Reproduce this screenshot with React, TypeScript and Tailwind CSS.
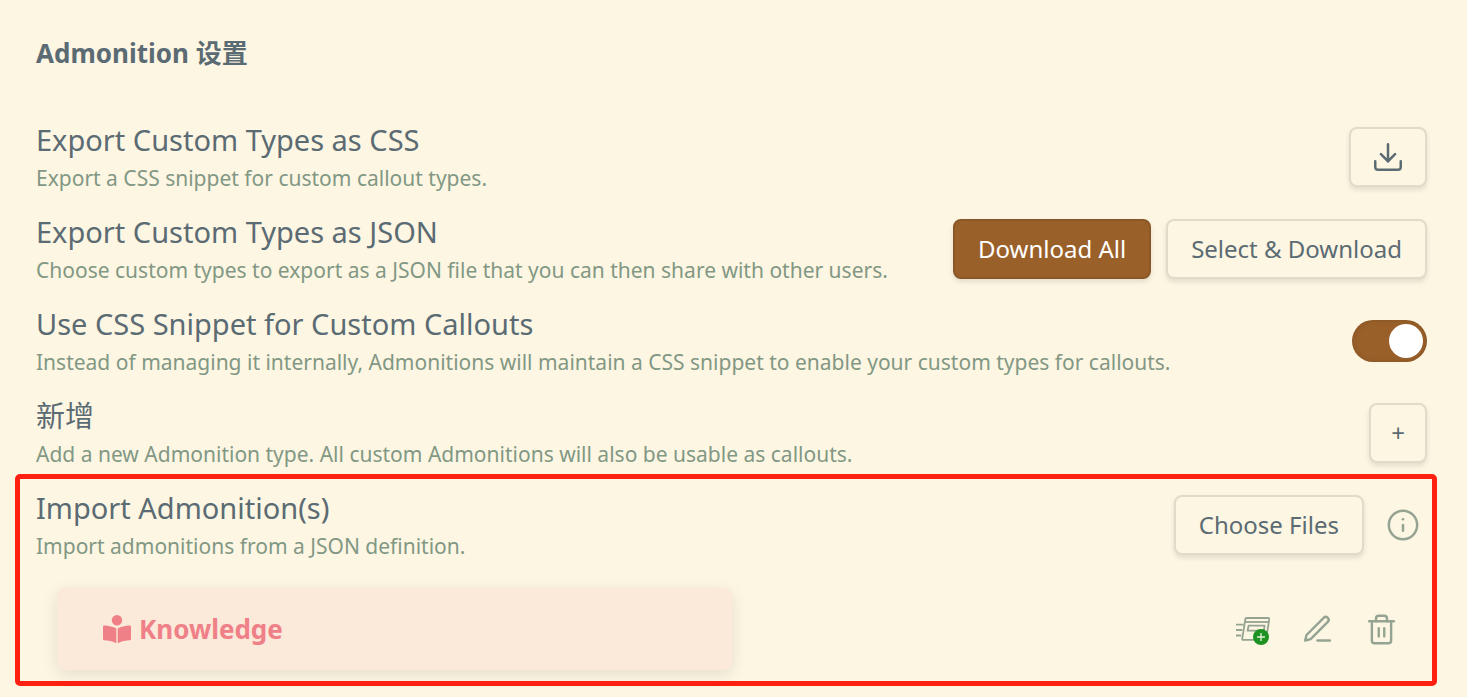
import { useState } from 'react';
import type { ButtonHTMLAttributes, ReactNode } from 'react';

const lineIcon = {
  viewBox: '0 0 24 24',
  fill: 'none',
  stroke: 'currentColor',
  strokeWidth: 1.75,
  strokeLinecap: 'round',
  strokeLinejoin: 'round',
  'aria-hidden': true,
} as const;

function DownloadIcon() {
  return (
    <svg {...lineIcon} className="size-[34px]">
      <path d="M21 15v4a2 2 0 0 1-2 2H5a2 2 0 0 1-2-2v-4" />
      <path d="m7 10 5 5 5-5" />
      <path d="M12 15V3" />
    </svg>
  );
}

function InfoIcon() {
  return (
    <svg {...lineIcon} className="size-[34px]">
      <circle cx="12" cy="12" r="10" />
      <path d="M12 16v-4" />
      <path d="M12 8h.01" />
    </svg>
  );
}

function PencilIcon() {
  return (
    <svg {...lineIcon} className="size-[33px]">
      <path d="M12 20h9" />
      <path d="M16.5 3.5a2.12 2.12 0 0 1 3 3L7 19l-4 1 1-4Z" />
    </svg>
  );
}

function TrashIcon() {
  return (
    <svg {...lineIcon} className="size-[33px]">
      <path d="M3 6h18" />
      <path d="M19 6v14a2 2 0 0 1-2 2H7a2 2 0 0 1-2-2V6" />
      <path d="M8 6V4a2 2 0 0 1 2-2h4a2 2 0 0 1 2 2v2" />
      <path d="M10 11v6M14 11v6" />
    </svg>
  );
}

function CommandIcon() {
  return (
    <svg viewBox="0 0 34 34" fill="none" aria-hidden="true" className="size-[34px]">
      <g stroke="currentColor" strokeWidth="1.8" strokeLinejoin="round">
        <path d="M10.5 6h21.8c.8 0 1.1.4 1 1.1l-3.2 19.7c-.1.7-.6 1.1-1.3 1.1H7.2c-.8 0-1.2-.5-1-1.2L9.4 7c.1-.6.5-1 1.1-1Z" />
        <path d="M9.2 10H32" />
        <path d="M12.6 13.7h16l-.8 5H11.6Z" />
        <path d="M0 12.7h7.5M0 18h6.3M0 23.500h5.2" />
      </g>
      <circle cx="25" cy="25" r="8" fill="#1f9321" />
      <path d="M25 21v8M21 25h8" stroke="#e6f1d8" strokeWidth="1.3" />
    </svg>
  );
}

function ReaderIcon() {
  return (
    <svg viewBox="0 0 28 28" fill="currentColor" aria-hidden="true" className="size-7">
      <circle cx="14" cy="5.2" r="5.2" />
      <path d="M13.3 13.6C10.3 11.7 6 10.7 1.3 10.5.5 10.5 0 11 0 11.7v12.4c0 .7.5 1.2 1.2 1.2 4 .2 7.9 1 11.4 2.6.4.2.7 0 .7-.5Z" />
      <path d="M14.7 13.6c3-1.9 7.300-2.900 12-3.100.8 0 1.300.5 1.300 1.200v12.400c0 .7-.5 1.200-1.200 1.200-4 .2-7.900 1-11.400 2.600-.4.200-.7 0-.7-.5Z" />
    </svg>
  );
}

type ButtonProps = ButtonHTMLAttributes<HTMLButtonElement> & { primary?: boolean; compact?: boolean };

function Button({ primary = false, compact = false, children, ...rest }: ButtonProps) {
  const tone = primary
    ? 'border-[#8c5726] bg-[#9a602a] text-white'
    : 'border-[#e2dbc9] bg-[#fdf6e3] text-[#5b6b73]';
  const padding = compact ? 'px-5' : 'px-[23px]';
  return (
    <button
      type="button"
      className={`flex h-[60px] items-center justify-center rounded-lg border-2 text-2xl whitespace-nowrap shadow-[0_3px_5px_rgba(0,0,0,0.1)] ${padding} ${tone}`}
      {...rest}
    >
      {children}
    </button>
  );
}

function IconButton({ label, children }: { label: string; children: ReactNode }) {
  return (
    <button type="button" aria-label={label} className="shrink-0 text-[#95a392]">
      {children}
    </button>
  );
}

type SettingProps = { name: string; description: string; children: ReactNode };

function Setting({ name, description, children }: SettingProps) {
  return (
    <div className="flex items-center justify-between gap-4 py-2">
      <div className="min-w-0">
        <h3 className="text-[29px] leading-[42px]">{name}</h3>
        <p className="text-[21px] leading-[34px] text-[#829884]">{description}</p>
      </div>
      <div className="flex shrink-0 items-center gap-[15px]">{children}</div>
    </div>
  );
}

export default function App() {
  const [useSnippet, setUseSnippet] = useState(true);

  return (
    <main className="min-h-screen bg-[#fdf6e3] pt-8 pr-[30px] pb-[11px] pl-[15px] font-['Noto_Sans','Noto_Sans_CJK_SC',sans-serif] text-[#5b6b73]">
      <section className="pr-[10px] pl-[21px]">
        <h2 className="mb-[37px] text-[26px] leading-[42px] font-bold">Admonition 设置</h2>

        <Setting
          name="Export Custom Types as CSS"
          description="Export a CSS snippet for custom callout types."
        >
          <Button compact aria-label="Export as CSS">
            <DownloadIcon />
          </Button>
        </Setting>

        <Setting
          name="Export Custom Types as JSON"
          description="Choose custom types to export as a JSON file that you can then share with other users."
        >
          <Button primary>Download All</Button>
          <Button>Select &amp; Download</Button>
        </Setting>

        <Setting
          name="Use CSS Snippet for Custom Callouts"
          description="Instead of managing it internally, Admonitions will maintain a CSS snippet to enable your custom types for callouts."
        >
          <input
            type="checkbox"
            role="switch"
            aria-label="Use CSS Snippet for Custom Callouts"
            checked={useSnippet}
            onChange={(event) => setUseSnippet(event.target.checked)}
            className="flex h-[42px] w-[75px] appearance-none items-center rounded-full bg-[#cfc8b4] px-1 shadow-[inset_0_0_6px_rgba(0,0,0,0.15)] before:size-[34px] before:rounded-full before:bg-white before:content-[''] checked:justify-end checked:bg-[#9a602a]"
          />
        </Setting>

        <Setting
          name="新增"
          description="Add a new Admonition type. All custom Admonitions will also be usable as callouts."
        >
          <Button compact aria-label="新增">
            +
          </Button>
        </Setting>
      </section>

      <section className="-mt-[5px] rounded-[5px] border-[5px] border-[#ff2012] pr-[5px] pb-[11px] pl-4">
        <Setting name="Import Admonition(s)" description="Import admonitions from a JSON definition.">
          <Button>Choose Files</Button>
          <span className="flex px-[7px]">
            <IconButton label="Import information">
              <InfoIcon />
            </IconButton>
          </span>
        </Setting>

        <div className="mt-[17px] flex items-center justify-between px-[21px]">
          <div className="flex h-[82px] w-1/2 items-center gap-2 rounded-lg bg-[#fbe9da] px-[46px] text-[#ef8087] shadow-[0_4px_16px_rgba(0,0,0,0.1)]">
            <ReaderIcon />
            <span className="text-[26px] leading-[42px] font-bold">Knowledge</span>
          </div>
          <div className="flex items-center gap-[31px] pr-2">
            <IconButton label="Register commands">
              <CommandIcon />
            </IconButton>
            <IconButton label="Edit">
              <PencilIcon />
            </IconButton>
            <IconButton label="Delete">
              <TrashIcon />
            </IconButton>
          </div>
        </div>
      </section>
    </main>
  );
}
